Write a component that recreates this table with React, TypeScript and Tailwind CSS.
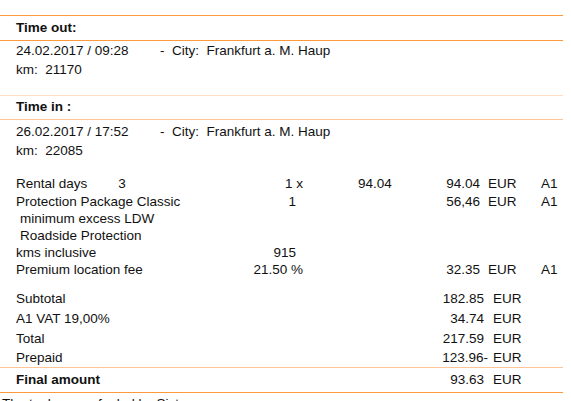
function DateRow({ date, city }: { date: string; city: string }) {
  return (
    <div className="flex px-4 leading-[19px]">
      <span className="w-[144px]">{date}</span>
      <span className="whitespace-pre">{`-  City:  ${city}`}</span>
    </div>
  );
}

type Item = {
  label: string;
  extra?: string;
  qty?: string;
  qtyPad?: boolean;
  price?: string;
  amount?: string;
  code?: string;
  indent?: boolean;
};

const items: Item[] = [
  { label: "Rental days", extra: "3", qty: "1 x", price: "94.04", amount: "94.04", code: "A1" },
  { label: "Protection Package Classic", qty: "1", qtyPad: true, amount: "56,46", code: "A1" },
  { label: "minimum excess LDW", indent: true },
  { label: "Roadside Protection", indent: true },
  { label: "kms inclusive", qty: "915", qtyPad: true },
  { label: "Premium location fee", qty: "21.50 %", amount: "32.35", code: "A1" },
];

const totals = [
  { label: "A1 VAT 19,00%", amount: "34.74" },
  { label: "Total", amount: "217.59" },
];

export default function App() {
  return (
    <div className="h-[401px] w-[571px] overflow-hidden bg-white pt-[15px] font-['Liberation_Sans',Arial,sans-serif] text-[13.5px] text-[#111]">
      <div className="w-[563px]">
        <div className="flex h-[26px] items-center border-t border-b border-t-[#ff9a3c] border-b-[#ff9a3c] px-4 font-bold">
          Time out:
        </div>
        <DateRow date="24.02.2017 / 09:28" city="Frankfurt a. M. Haup" />
        <div className="px-4 leading-[19px] whitespace-pre">km:  21170</div>

        <div className="mt-[16px] flex h-[25px] items-center border-t border-b border-t-[#ffdcc4] border-b-[#ffc596] px-4 font-bold">
          Time in :
        </div>
        <div className="pt-[2px]">
          <DateRow date="26.02.2017 / 17:52" city="Frankfurt a. M. Haup" />
          <div className="px-4 leading-[19px] whitespace-pre">km:  22085</div>
        </div>

        <div className="mt-[16px]">
          {items.map((it) => (
            <div key={it.label} className="flex h-[17.2px] items-center pl-4">
              <span className={`flex w-[224px] ${it.indent ? "pl-[4px]" : ""}`}>
                <span>{it.label}</span>
                {it.extra && <span className="ml-[31px]">{it.extra}</span>}
              </span>
              <span className={`w-[63px] text-right ${it.qtyPad ? "pr-[7px]" : ""}`}>{it.qty}</span>
              <span className="w-[100px] pl-[55px]">{it.price}</span>
              <span className="w-[77px] text-right">{it.amount}</span>
              <span className="ml-[8px] w-[53px]">{it.amount ? "EUR" : ""}</span>
              <span>{it.code}</span>
            </div>
          ))}
        </div>

        <div className="mt-[10px]">
          <div className="flex h-[20px] items-center pl-4">
            <span className="w-[401px]">Subtotal</span>
            <span className="w-[67px] text-right">182.85</span>
            <span className="ml-[9px]">EUR</span>
          </div>
          {totals.map((t) => (
            <div key={t.label} className="flex h-[20px] items-center pl-4">
              <span className="w-[401px]">{t.label}</span>
              <span className="w-[67px] text-right">{t.amount}</span>
              <span className="ml-[9px]">EUR</span>
            </div>
          ))}
          <div className="flex h-[18px] items-center pl-4">
            <span className="w-[401px]">Prepaid</span>
            <span className="w-[71px] text-right">123.96-</span>
            <span className="ml-[5px]">EUR</span>
          </div>
        </div>

        <div className="flex h-[26px] items-center border-t border-b border-t-[#ffc596] border-b-[#ff9a3c] pl-4">
          <span className="w-[401px] font-bold">Final amount</span>
          <span className="w-[67px] text-right">93.63</span>
          <span className="ml-[9px]">EUR</span>
        </div>

        <div className="pl-[2px] pt-[2px] leading-[17px]">
          The tank was refueled by Sixt.
        </div>
      </div>
    </div>
  );
}
